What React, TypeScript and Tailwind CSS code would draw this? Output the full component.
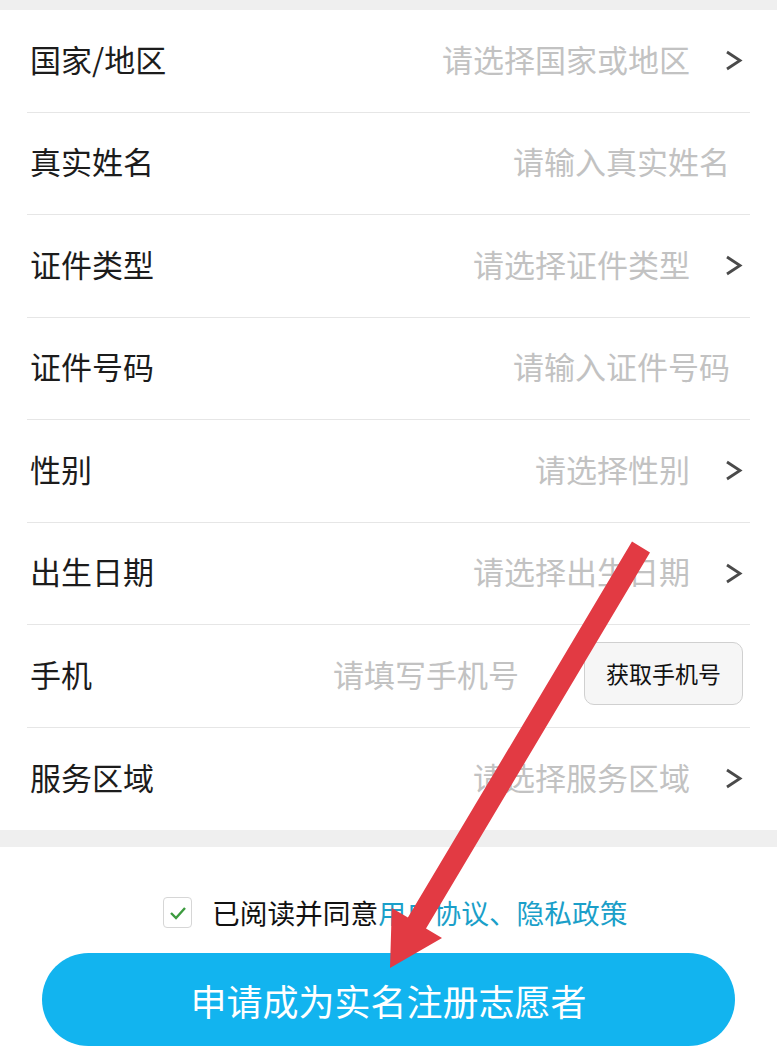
import React from "react";

type Row = { label: string; placeholder: string; chevron?: boolean; phone?: boolean };

const rows: Row[] = [
  { label: "国家/地区", placeholder: "请选择国家或地区", chevron: true },
  { label: "真实姓名", placeholder: "请输入真实姓名" },
  { label: "证件类型", placeholder: "请选择证件类型", chevron: true },
  { label: "证件号码", placeholder: "请输入证件号码" },
  { label: "性别", placeholder: "请选择性别", chevron: true },
  { label: "出生日期", placeholder: "请选择出生日期", chevron: true },
  { label: "手机", placeholder: "请填写手机号", phone: true },
  { label: "服务区域", placeholder: "请选择服务区域", chevron: true },
];

function Chevron() {
  return (
    <svg width="19" height="21" viewBox="0 0 19 21" className="ml-[34px] mt-[5px] shrink-0">
      <polyline points="3,2 16,10.5 3,19" fill="none" stroke="#4a4a4a" strokeWidth="2.8" strokeLinejoin="miter" />
    </svg>
  );
}

export default function App() {
  return (
    <div className="relative w-[777px] h-[1050px] bg-white overflow-hidden font-['Noto_Sans_CJK_SC',sans-serif]">
      <div className="h-[10px] bg-[#efefef]" />
      <div className="mx-[27px]">
        {rows.map((r, i) => (
          <div
            key={r.label}
            className={
              "h-[102.5px] pb-[5px] flex items-center " +
              (i < rows.length - 1 ? "border-b border-[#e6e6e6]" : "")
            }
          >
            <div className="pl-[3px] text-[31px] leading-none text-[#1c1c1c]">{r.label}</div>
            <div className="flex-1" />
            {r.phone ? (
              <div className="flex items-center pr-[7px]">
                <div className="text-[31px] leading-none text-[#c2c2c2]">{r.placeholder}</div>
                <div className="ml-[65px] w-[159px] h-[63px] rounded-[10px] border border-[#d0d0d0] bg-[#f6f6f6] flex items-center justify-center text-[23px] text-[#111]">
                  获取手机号
                </div>
              </div>
            ) : r.chevron ? (
              <div className="flex items-center pr-[7px]">
                <div className="text-[31px] leading-none text-[#c2c2c2]">{r.placeholder}</div>
                <Chevron />
              </div>
            ) : (
              <div className="pr-[20px] text-[31px] leading-none text-[#c2c2c2]">{r.placeholder}</div>
            )}
          </div>
        ))}
      </div>
      <div className="h-[17px] bg-[#efefef]" />
      <div className="pt-[50px] flex items-center pl-[163px]">
        <div className="w-[29px] h-[31px] rounded-[4px] border border-[#d6d6d6] bg-white flex items-center justify-center">
          <svg width="18" height="14" viewBox="0 0 18 14">
            <polyline points="2,7 7,12 16,2" fill="none" stroke="#3c9b3f" strokeWidth="2.4" />
          </svg>
        </div>
        <div className="ml-[20px] text-[27.7px] leading-none text-[#111]">
          已阅读并同意<span className="text-[#1b9fc9]">用户协议、隐私政策</span>
        </div>
      </div>
      <div className="mt-[25px] mx-[42px] h-[93px] rounded-full bg-[#12b4ef] flex items-center justify-center text-white text-[36px] leading-none">
        申请成为实名注册志愿者
      </div>
      <svg className="absolute inset-0 pointer-events-none" width="777" height="1050" viewBox="0 0 777 1050">
        <polygon
          points="632,541.6 650,552.4 426,928.4 442,938 390,968 391.8,908 407.9,917.6"
          fill="#e23a43"
        />
      </svg>
    </div>
  );
}
